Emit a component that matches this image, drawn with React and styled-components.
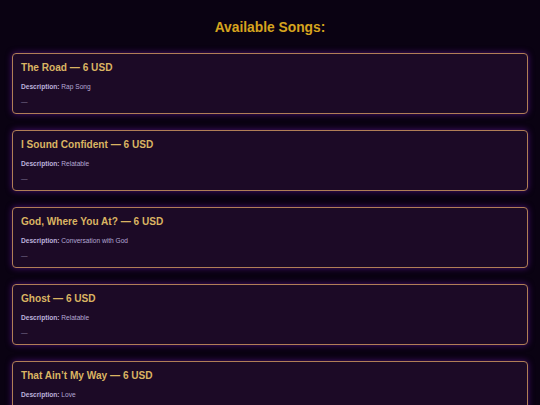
import React from "react";
import styled, { createGlobalStyle } from "styled-components";

const Global = createGlobalStyle`
  html, body {
    margin: 0;
    padding: 0;
    background: #0a0212;
    font-family: "Liberation Sans", Arial, sans-serif;
  }
`;

const Page = styled.div`
  padding: 0 12px 12px 12px;
`;

const Heading = styled.h2`
  margin: 0;
  padding: 20px 0 17px;
  text-align: center;
  color: #d6a41e;
  font-size: 13.8px;
  font-weight: bold;
  line-height: 16px;
`;

const List = styled.div`
  display: flex;
  flex-direction: column;
  gap: 16px;
`;

const Card = styled.div`
  background: #1c0a26;
  border: 1px solid #b07e56;
  border-radius: 4px;
  box-shadow: 0 0 6px rgba(120, 30, 190, 0.55);
  padding: 8px 8px 6px;
  height: 61px;
  box-sizing: border-box;
`;

const Title = styled.h3`
  margin: 0 0 9px;
  color: #dab462;
  font-size: 10.1px;
  font-weight: bold;
  line-height: 12px;
`;

const Desc = styled.p`
  margin: 0 0 7px;
  font-size: 6.6px;
  line-height: 8px;
  color: #b4a8d4;
`;

const Label = styled.strong`
  color: #bcb0dc;
`;

const Extra = styled.p`
  margin: 0;
  font-size: 6.6px;
  line-height: 8px;
  color: #7f7394;
`;

const songs = [
  { title: "The Road", price: 6, desc: "Rap Song" },
  { title: "I Sound Confident", price: 6, desc: "Relatable" },
  { title: "God, Where You At?", price: 6, desc: "Conversation with God" },
  { title: "Ghost", price: 6, desc: "Relatable" },
  { title: "That Ain\u2019t My Way", price: 6, desc: "Love" },
];

export default function App() {
  return (
    <Page>
      <Global />
      <Heading>Available Songs:</Heading>
      <List>
        {songs.map((s) => (
          <Card key={s.title}>
            <Title>
              {s.title} — {s.price} USD
            </Title>
            <Desc>
              <Label>Description:</Label> {s.desc}
            </Desc>
            <Extra>—</Extra>
          </Card>
        ))}
      </List>
    </Page>
  );
}
